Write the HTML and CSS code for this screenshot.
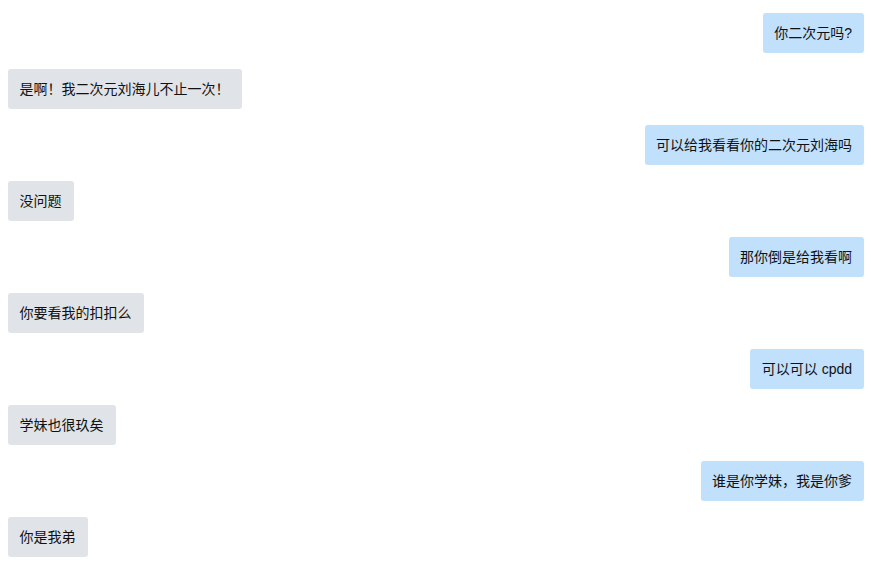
FILE: index.html
```html
<!DOCTYPE html>
<html lang="zh">
<head>
<meta charset="utf-8">
<link rel="stylesheet" href="styles.css">
</head>
<body>
<div class="chat">
  <div class="msg me">你二次元吗?</div>
  <div class="msg other">是啊！我二次元刘海儿不止一次！</div>
  <div class="msg me">可以给我看看你的二次元刘海吗</div>
  <div class="msg other">没问题</div>
  <div class="msg me">那你倒是给我看啊</div>
  <div class="msg other">你要看我的扣扣么</div>
  <div class="msg me">可以可以 cpdd</div>
  <div class="msg other">学妹也很玖矣</div>
  <div class="msg me">谁是你学妹，我是你爹</div>
  <div class="msg other">你是我弟</div>
</div>
</body>
</html>
```
FILE: styles.css
```css
body {
  margin: 8px 7px 8px 8px;
  font-family: "Liberation Sans", "Noto Sans CJK SC", sans-serif;
  font-size: 14px;
  color: #111;
}
.chat {
  display: flex;
  flex-direction: column;
  gap: 16px;
  padding-top: 5px;
}
.msg {
  padding: 10px 12px 10px 11.5px;
  line-height: 20px;
  border-radius: 3px;
}
.me {
  align-self: flex-end;
  background: #c0e0fc;
}
.other {
  align-self: flex-start;
  background: #e0e3e7;
}
```
